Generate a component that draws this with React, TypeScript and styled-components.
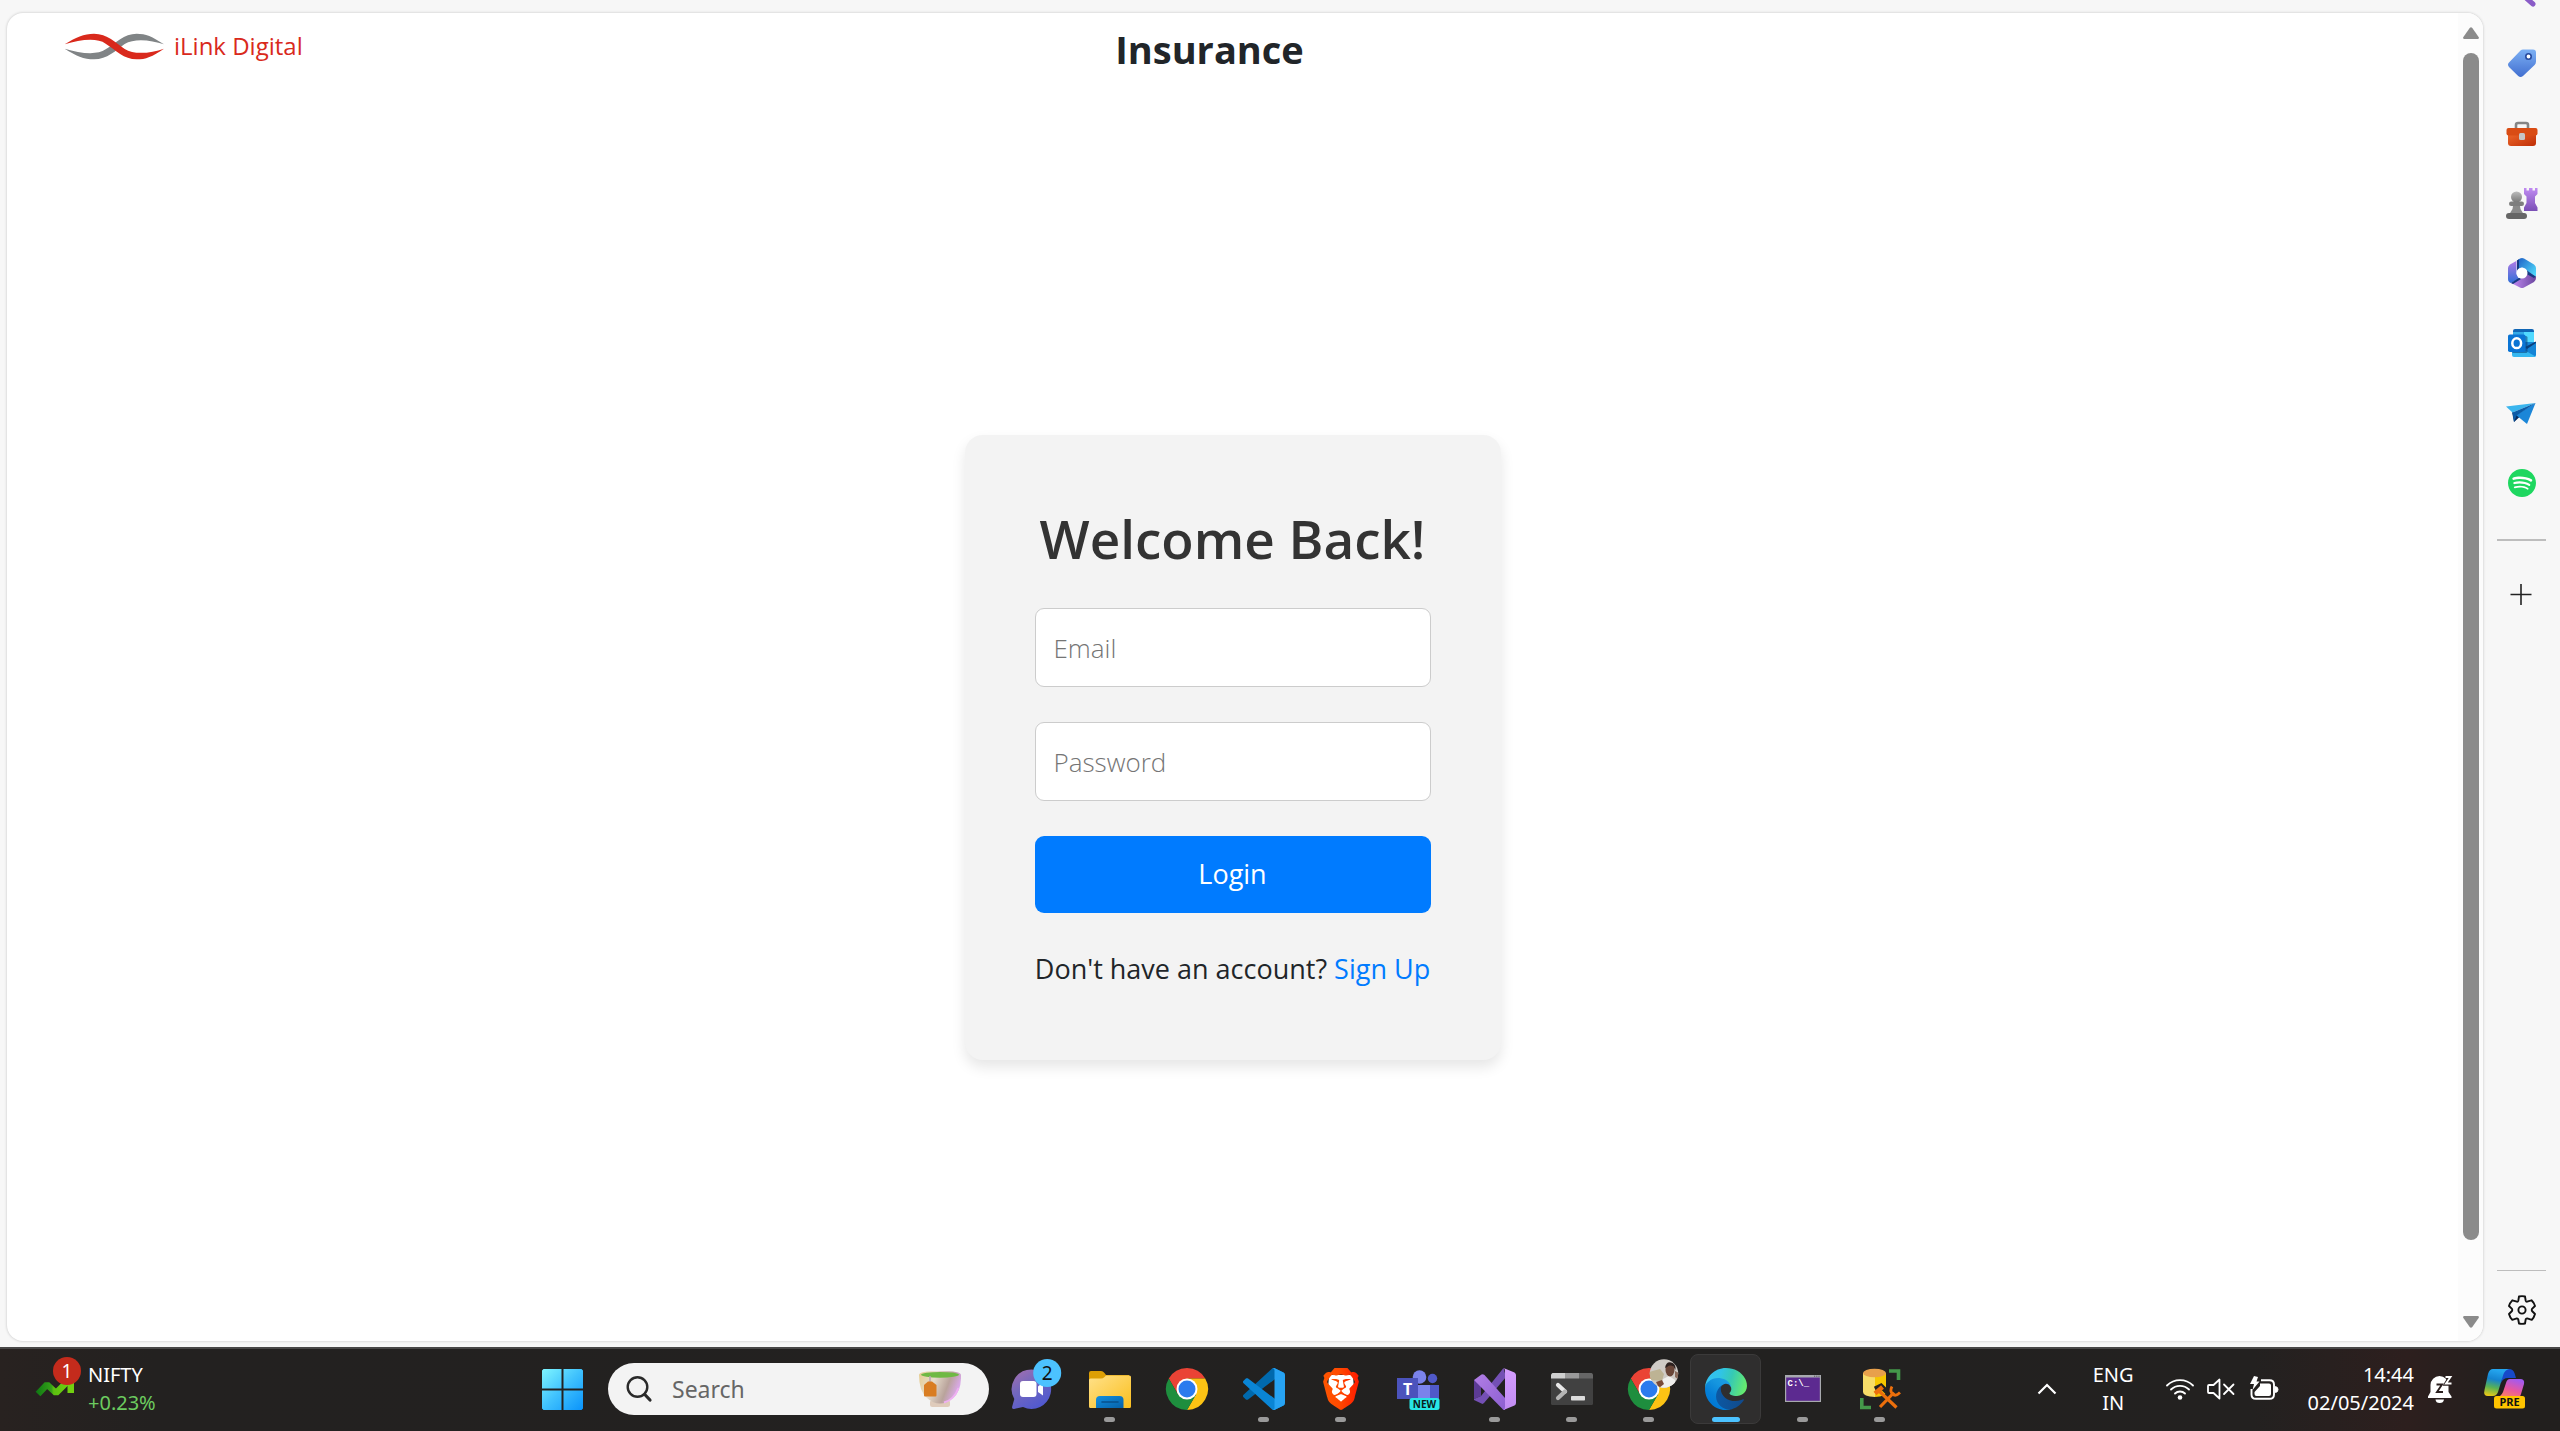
import React from 'react';
import styled, { createGlobalStyle } from 'styled-components';
import { SiBrave, SiSpotify } from 'react-icons/si';

const GlobalStyle = createGlobalStyle`
  *, *::before, *::after { box-sizing: border-box; }
  body {
    margin: 0;
    background: #f7f7f7;
    color: #212529;
    font-family: "Open Sans", "Noto Sans", sans-serif;
    font-size: 27px;
    line-height: 42px;
  }
  h1, h2, p { margin: 0; }
  button, input { font: inherit; }
  button { border: 0; padding: 0; background: none; color: inherit; cursor: pointer; }
  svg { display: block; }
`;

/* ---------- layout ---------- */

const Screen = styled.div`
  display: flex;
  flex-direction: column;
  height: 100vh;
  overflow: hidden;
`;

const BrowserArea = styled.div`
  flex: 1;
  min-height: 0;
  display: flex;
  padding-left: 7px;
`;

const PageFrame = styled.div`
  flex: 1;
  display: flex;
  margin: 13px 0 6px;
  border-radius: 16px;
  background: #fff;
  box-shadow: 0 0 3px rgba(0, 0, 0, 0.22);
  overflow: hidden;
`;

const Page = styled.main`
  flex: 1;
  display: flex;
  flex-direction: column;
`;

const Header = styled.header`
  display: grid;
  grid-template-columns: 1fr auto 1fr;
  height: 70px;
  padding: 8px 103px 0 57px;
`;

const Brand = styled.a`
  display: flex;
  align-items: center;
  justify-self: start;
  gap: 9px;
  height: 50px;
  color: #d9291c;
  font-size: 24px;
  text-decoration: none;
`;

const PageTitle = styled.h1`
  font-size: 38px;
  font-weight: 700;
  line-height: 56px;
`;

const LoginSection = styled.section`
  flex: 1;
  display: flex;
  align-items: center;
  justify-content: center;
  padding-top: 70px;
`;

const Card = styled.form`
  display: flex;
  flex-direction: column;
  gap: 35px;
  width: 536px;
  height: 625px;
  padding: 70px;
  border-radius: 18px;
  background: #f3f3f3;
  box-shadow: 0 7px 14px rgba(0, 0, 0, 0.1);
`;

const CardTitle = styled.h2`
  color: #333;
  font-size: 53px;
  font-weight: 600;
  line-height: 68px;
  text-align: center;
  white-space: nowrap;
`;

const TextInput = styled.input`
  display: block;
  width: 100%;
  height: 79px;
  padding: 2px 18px 0;
  border: 1px solid #ccc;
  border-radius: 9px;
  background: #fff;
  color: #212529;
  font-size: 26px;
  outline: none;
  &::placeholder { color: #757575; font-weight: 300; opacity: 1; }
`;

const LoginButton = styled.button`
  height: 77px;
  border-radius: 9px;
  background: #007bff;
  color: #fff;
`;

const SignUpLine = styled.p`
  text-align: center;
  white-space: nowrap;
`;

const SignUpLink = styled.a`
  color: #007bff;
  text-decoration: none;
`;

const ScrollTrack = styled.div`
  display: flex;
  flex-direction: column;
  align-items: center;
  width: 25px;
  padding: 14px 0 13px;
  background: #fcfcfc;
`;

const ScrollThumb = styled.div`
  width: 16px;
  height: 1187px;
  margin: 14px 0 auto;
  border-radius: 8px;
  background: #8b8b8b;
`;

/* ---------- browser side bar ---------- */

const SideBar = styled.nav`
  display: flex;
  flex-direction: column;
  align-items: center;
  width: 77px;
  padding-bottom: 2px;
`;

const SideList = styled.div`
  display: flex;
  flex-direction: column;
  margin-top: -42px;
`;

const SideButton = styled.button`
  display: flex;
  align-items: center;
  justify-content: center;
  width: 77px;
  height: 70px;
`;

const SideDivider = styled.div<{ $thick?: boolean }>`
  width: 49px;
  height: ${(p) => (p.$thick ? 2 : 1)}px;
  margin: ${(p) => (p.$thick ? '21px 0 19px' : 'auto 0 4px')};
  background: #bdbdbd;
`;

/* ---------- task bar ---------- */

const TaskBar = styled.footer`
  display: grid;
  grid-template-columns: 524px auto 1fr;
  height: 84px;
  padding-bottom: 2px;
  border-top: 2px solid #484747;
  background: linear-gradient(90deg, #282220 0%, #232120 6%, #222120 70%, #232120 88%, #2d1f1e 94%, #221f1e 98%);
  color: #fff;
  font-family: "Noto Sans", "Open Sans", sans-serif;
  font-size: 20px;
  line-height: 28px;
`;

const Widget = styled.button`
  display: flex;
  align-items: center;
  justify-self: start;
  gap: 12px;
  padding-left: 35px;
  text-align: left;
  svg { overflow: visible; }
`;

const WidgetChange = styled.div`
  color: #6ccb5f;
`;

const Apps = styled.div`
  display: flex;
  align-items: stretch;
`;

const SearchBox = styled.label`
  display: flex;
  align-items: center;
  align-self: center;
  width: 381px;
  height: 52px;
  margin: 0 5px 0 7px;
  padding: 0 28px 0 17px;
  border-radius: 26px;
  background: #f3f3f3;
`;

const SearchInput = styled.input`
  flex: 1;
  min-width: 0;
  padding: 0 0 0 19px;
  border: 0;
  outline: none;
  background: none;
  color: #333;
  font-size: 23px;
  &::placeholder { color: #666; opacity: 1; }
`;

const AppButton = styled.button<{ $active?: boolean }>`
  position: relative;
  display: flex;
  align-items: center;
  justify-content: center;
  width: 77px;
  &::before {
    content: "";
    position: absolute;
    inset: 5px 3px;
    border-radius: 8px;
    border: 1px solid #3b3a3a;
    background: #2f2e2e;
    display: ${(p) => (p.$active ? 'block' : 'none')};
  }
  svg { position: relative; overflow: visible; }
`;

const Indicator = styled.span<{ $active?: boolean }>`
  position: absolute;
  bottom: 7px;
  width: ${(p) => (p.$active ? 28 : 11)}px;
  height: 5px;
  border-radius: 3px;
  background: ${(p) => (p.$active ? '#4cc2ff' : '#9a9a9a')};
`;

const Tray = styled.div`
  display: flex;
  align-items: center;
  justify-content: flex-end;
  padding-right: 35px;
`;

const TrayButton = styled.button<{ $gap?: number }>`
  display: flex;
  align-items: center;
  margin-right: ${(p) => p.$gap ?? 0}px;
`;

const Language = styled(TrayButton)`
  display: block;
  text-align: center;
`;

const Clock = styled(TrayButton)`
  display: block;
  text-align: right;
`;

/* ---------- drawings ---------- */

const BrandMark = () => (
  <svg width="101" height="27" viewBox="191 99 301 81" aria-hidden="true">
    <path fill="#808486" d="M192 146C225 167 250 178 280 178C320 178 345 151 372 132C400 114 450 119 490 133C455 109 435 101 408 101C370 101 345 129 315 148C290 166 240 161 192 146Z" />
    <path fill="#d9291c" d="M192 133C225 112 250 101 280 101C320 101 345 128 372 147C400 165 450 160 490 146C455 170 435 178 408 178C370 178 345 150 315 131C290 113 240 118 192 133Z" />
  </svg>
);

const Triangle = ({ down }: { down?: boolean }) => (
  <svg width="16" height="12" viewBox="0 0 16 12" aria-hidden="true">
    <path fill="#8b8b8b" d={down ? 'M1 0H15Q16.5 .5 15.6 2L9.3 11Q8 12.6 6.7 11L.4 2Q-.5 .5 1 0Z' : 'M1 12H15Q16.5 11.5 15.6 10L9.3 1Q8 -.6 6.7 1L.4 10Q-.5 11.5 1 12Z'} />
  </svg>
);

const SearchTail = () => (
  <svg width="32" height="32" viewBox="0 0 32 32" aria-hidden="true">
    <circle cx="12" cy="12" r="9" fill="none" stroke="#3c7fd6" strokeWidth="3" />
    <path d="M19 20L27 27" stroke="#8a5cc7" strokeWidth="5" strokeLinecap="round" />
  </svg>
);

const TagIcon = () => (
  <svg width="32" height="32" viewBox="0 0 32 32" aria-hidden="true">
    <defs>
      <linearGradient id="tag" x1="0" y1="0" x2="0" y2="1">
        <stop offset="0" stopColor="#7cb0f4" /><stop offset="1" stopColor="#426fd0" />
      </linearGradient>
    </defs>
    <path fill="url(#tag)" d="M17 2.500H27Q30 2.500 30 5.500V14.500Q30 16.500 28.600 18L17 29Q14.500 31 12.200 29L3 20Q1 17.500 3 15.500L14.500 3.600Q15.500 2.500 17 2.500Z" />
    <circle cx="22.500" cy="9.500" r="2.700" fill="#fff" stroke="#26499d" strokeWidth="1.600" />
  </svg>
);

const ToolboxIcon = () => (
  <svg width="32" height="32" viewBox="0 0 32 32" aria-hidden="true">
    <defs>
      <linearGradient id="box" x1="0" y1="0" x2="1" y2="1">
        <stop offset="0" stopColor="#f06a2b" /><stop offset="1" stopColor="#bf2e07" />
      </linearGradient>
    </defs>
    <path d="M10 12V8Q10 6 12 6H20Q22 6 22 8V12" fill="none" stroke="#858585" strokeWidth="2.600" />
    <path fill="url(#box)" d="M2 15H30V26Q30 29 27 29H5Q2 29 2 26Z" />
    <rect x=".500" y="11" width="31" height="7.500" rx="2" fill="#d94c14" />
    <rect x="13" y="16" width="6" height="7" rx="1.500" fill="#c6c6c6" />
  </svg>
);

const ChessIcon = () => (
  <svg width="32" height="32" viewBox="0 0 32 32" aria-hidden="true">
    <defs>
      <linearGradient id="rook" x1="0" y1="0" x2="0" y2="1">
        <stop offset="0" stopColor="#c08bf2" /><stop offset="1" stopColor="#7a4fb5" />
      </linearGradient>
      <linearGradient id="pawn" x1="0" y1="0" x2="0" y2="1">
        <stop offset="0" stopColor="#bcbcbc" /><stop offset="1" stopColor="#777" />
      </linearGradient>
    </defs>
    <path fill="url(#rook)" d="M18 1H20.500V3.500H23V1H26.500V3.500H29V1H31.500V7L29 9.500V16L31.500 20.500V24H18V20.500L20.500 16V9.500L18 7Z" />
    <path fill="#8a8a8a" d="M7.500 16H13.500L14.500 22L17.500 27H3.500L6.500 22Z" />
    <circle cx="10.500" cy="10" r="5.500" fill="url(#pawn)" />
    <rect x="3" y="14.500" width="15" height="4.500" rx="2.200" fill="#7e7e7e" />
    <rect x="0" y="26" width="21" height="6" rx="3" fill="#666" />
  </svg>
);

const M365Icon = () => (
  <svg width="32" height="32" viewBox="0 0 32 32" aria-hidden="true">
    <defs>
      <linearGradient id="m1" x1="0" y1="0" x2="0" y2="1">
        <stop offset="0" stopColor="#b57be6" /><stop offset="1" stopColor="#2f6fd8" />
      </linearGradient>
      <linearGradient id="m2" x1="0" y1="0" x2="1" y2=".8">
        <stop offset="0" stopColor="#1c5bc4" /><stop offset="1" stopColor="#4fd8fb" />
      </linearGradient>
      <linearGradient id="m3" x1="0" y1="0" x2="1" y2="0">
        <stop offset="0" stopColor="#c48cf5" /><stop offset="1" stopColor="#6b479f" />
      </linearGradient>
    </defs>
    <path fill="url(#m1)" d="M12 3L4 7.500Q2 9 2 11V22Q2 25 5 26L13 22L10.500 17V3.500Z" />
    <path fill="url(#m2)" d="M11 3.500L14 1.500Q16 .5 18 1.500L28 7.500Q30 9 30 11V20L21 14L16 10.500L11 15Z" />
    <path fill="url(#m3)" d="M30 19.500V21Q30 23.500 28 25L18 30.500Q16 31.500 14 30.500L5 26L15 21L21 15Z" />
    <path fill="#173a83" d="M11 3.500L13 2.300V12L11 15ZM21 13.500L29.500 19.500L28 21L20.500 17ZM5 26L13.500 20.500L15 22L7 27Z" />
    <circle cx="16" cy="16" r="5.500" fill="#fff" />
  </svg>
);

const OutlookIcon = () => (
  <svg width="32" height="32" viewBox="0 0 32 32" aria-hidden="true">
    <path fill="#1066b5" d="M7 4Q7 2 9 2H26Q28 2 28 4V8H7Z" />
    <path fill="#32a9e7" d="M7 5H18V15H7Z" />
    <path fill="#50d9ff" d="M18 5H28V15H18Z" />
    <path fill="#1484d6" d="M18 15H30V28Q30 30 28 30H18Z" />
    <path fill="#0a3f7c" d="M19 20L30 14.500V16L21 22Z" />
    <path fill="#35b8f1" d="M6 24H20L29.500 29.500Q29 30 28 30H8Q6 30 6 28Z" />
    <rect x="6" y="9" width="15.500" height="17" rx="1.500" fill="#083c74" opacity=".55" />
    <rect x="2" y="7.500" width="17.500" height="17.500" rx="1.800" fill="#0a74d4" />
    <ellipse cx="10.700" cy="16.200" rx="4.400" ry="4.900" fill="none" stroke="#fff" strokeWidth="2.500" />
  </svg>
);

const PlaneIcon = () => (
  <svg width="32" height="32" viewBox="0 0 32 32" aria-hidden="true">
    <path fill="#0c3c78" d="M6 15L8 25L13.500 19Z" />
    <path fill="#072b5e" d="M8 25L11 17.500L14 19.500Z" />
    <path fill="#3ab5ee" d="M0 9.500L29.500 6L6.500 15.500Z" />
    <path fill="#1b86d8" d="M29.500 6L21 27L10 18Z" />
    <path fill="#0c5ba7" d="M6.500 15.500L29.500 6L10.500 18.500L8 25Z" />
  </svg>
);

const SpotifyIcon = () => (
  <svg width="30" height="30" viewBox="0 0 30 30" aria-hidden="true">
    <circle cx="15" cy="15" r="13" fill="#fff" />
    <SiSpotify x="1" y="1" size={28} color="#1ed760" />
  </svg>
);

const PlusIcon = () => (
  <svg width="24" height="24" viewBox="0 0 24 24" aria-hidden="true">
    <path d="M11 1V22M.5 11.500H21.500" stroke="#222" strokeWidth="1.600" />
  </svg>
);

const GearIcon = () => (
  <svg width="32" height="32" viewBox="0 0 32 32" fill="none" stroke="#111" strokeWidth="1.900" strokeLinejoin="round" aria-hidden="true">
    <path d="M13 2.500Q16 1.800 19 2.500L19.700 6.700Q20 7.600 21 7.700L25.500 6.300Q28.300 9 29 12L26 14.900Q25.400 16 26 17L29 20Q28.200 23.200 25.800 25.800L21.200 24.400Q20 24.300 19.700 25.300L19 29.500Q16 30.200 13 29.500L12.200 25.300Q11.900 24.300 10.800 24.400L6.300 25.800Q3.800 23.200 3 20L6 17Q6.600 16 6 14.900L3 12Q3.700 9 6.300 6.300L11 7.700Q12 7.600 12.300 6.700Z" />
    <circle cx="16" cy="16" r="3.600" />
  </svg>
);

const StocksIcon = () => (
  <svg width="41" height="42" viewBox="0 0 41 42" aria-hidden="true">
    <defs>
      <linearGradient id="st" gradientUnits="userSpaceOnUse" x1="0" x2="39" y1="0" y2="0">
        <stop offset="0" stopColor="#0c7513" /><stop offset=".42" stopColor="#35a018" /><stop offset=".48" stopColor="#5cc010" /><stop offset="1" stopColor="#74d60e" />
      </linearGradient>
    </defs>
    <path fill="none" stroke="url(#st)" strokeWidth="6.500" strokeLinejoin="bevel" d="M3 26L12 16.500L21 25L33 13" />
    <path fill="#72d010" d="M20 6H39V25H32.500V16Z" />
    <circle cx="32" cy="3" r="14" fill="#c42b1c" />
    <text x="32" y="10" textAnchor="middle" fontSize="19" fill="#fff">1</text>
  </svg>
);

const WindowsIcon = () => (
  <svg width="41" height="41" viewBox="0 0 41 41" aria-hidden="true">
    <defs>
      <linearGradient id="win" gradientUnits="userSpaceOnUse" x1="0" y1="0" x2="41" y2="41">
        <stop offset="0" stopColor="#7ff6ff" /><stop offset=".5" stopColor="#3fc1fd" /><stop offset="1" stopColor="#0a93fb" />
      </linearGradient>
    </defs>
    <path fill="url(#win)" d="M1.500 0H19.500V19.500H0V1.500ZM21.500 0H39.500L41 1.500V19.500H21.500ZM0 21.500H19.500V41H1.500L0 39.500ZM21.500 21.500H41V39.500L39.500 41H21.500Z" />
  </svg>
);

const MagnifierIcon = () => (
  <svg width="28" height="28" viewBox="0 0 28 28" fill="none" stroke="#2a2a2a" strokeLinecap="round" aria-hidden="true">
    <circle cx="12.500" cy="12" r="9.800" strokeWidth="2.400" />
    <path d="M19.800 19.500L25 25" strokeWidth="3.200" />
  </svg>
);

const TeaIcon = () => (
  <svg width="42" height="36" viewBox="0 0 42 36" aria-hidden="true">
    <defs>
      <linearGradient id="cup" x1="0" x2="1" y1="0" y2=".3">
        <stop offset="0" stopColor="#e6cc8e" /><stop offset=".4" stopColor="#e6dccb" /><stop offset=".75" stopColor="#b9a39b" /><stop offset="1" stopColor="#d9a9e6" />
      </linearGradient>
    </defs>
    <rect x="11" y="29" width="20" height="7" rx="2.500" fill="#dfcbbb" />
    <path fill="url(#cup)" d="M0 4Q0 0 21 0T42 4Q42.500 20 34 27Q28 32.500 21 32.500T8 27Q0 20 0 4Z" />
    <path d="M39.500 17Q35 29 25 31.500" stroke="#efb0f2" strokeWidth="2" fill="none" />
    <ellipse cx="21" cy="3.800" rx="19" ry="2.900" fill="#6fb944" />
    <path d="M11 5V11" stroke="#b8a4b0" strokeWidth="1.500" />
    <path fill="#d97d22" d="M5 14L9 10.500H13L17.500 14V24.500Q17.500 25.500 16.500 25.500H6Q5 25.500 5 24.500Z" />
  </svg>
);

const ChatIcon = () => (
  <svg width="42" height="42" viewBox="0 0 42 42" aria-hidden="true">
    <defs>
      <linearGradient id="chat" x1="0" x2=".6" y1="0" y2="1">
        <stop offset="0" stopColor="#a76fae" /><stop offset=".45" stopColor="#7568bd" /><stop offset="1" stopColor="#5159cf" />
      </linearGradient>
    </defs>
    <path fill="url(#chat)" d="M19.500 1.500A19.700 19.700 0 1 1 11 39L2 41Q-.5 41 .2 38.500L2.300 31A19.700 19.700 0 0 1 19.500 1.500Z" />
    <rect x="8" y="13" width="16.500" height="16" rx="3" fill="#fff" />
    <path fill="#fff" d="M26 18.500L31 14.500V27.500L26 24Z" />
    <circle cx="35.200" cy="5" r="14" fill="#4cc2ff" />
    <text x="35.200" y="12" textAnchor="middle" fontSize="19" fill="#111">2</text>
  </svg>
);

const FolderIcon = () => (
  <svg width="42" height="42" viewBox="0 0 42 42" aria-hidden="true">
    <defs>
      <linearGradient id="fol" x1="0" x2="1" y1="0" y2="1">
        <stop offset="0" stopColor="#ffe18a" /><stop offset="1" stopColor="#fbbf1e" />
      </linearGradient>
      <linearGradient id="folb" x1="0" x2="1" y1="0" y2="1">
        <stop offset="0" stopColor="#1490df" /><stop offset="1" stopColor="#0560a8" />
      </linearGradient>
    </defs>
    <path fill="#dd9f05" d="M0 5Q0 3 2 3H12Q14 3 15.500 5L17 7H40V16H0Z" />
    <path fill="url(#fol)" d="M0 12Q0 10.500 1.500 10.500H12Q14 10.500 15.500 9L17 7.500H40.500Q42 7.500 42 9V38.500Q42 40 40.500 40H1.500Q0 40 0 38.500Z" />
    <path fill="url(#folb)" d="M7 40V32Q7 28 11 28H30.500Q34.500 28 34.500 32V40Z" />
    <path d="M13 34H29" stroke="#07508c" strokeWidth="1.600" strokeLinecap="round" />
  </svg>
);

const ChromeIcon = ({ profile }: { profile?: boolean }) => (
  <svg width="42" height="42" viewBox="0 0 42 42" aria-hidden="true">
    <path fill="#ea4335" d="M39.190 10.500A21 21 0 0 0 2.810 10.500L11.900 26.250L21 21V10.500Z" />
    <path fill="#fcc314" d="M39.190 10.500A21 21 0 0 1 21 42L30.090 26.250L21 21V10.500Z" />
    <path fill="#1e8e3e" d="M21 42A21 21 0 0 1 2.810 10.500L11.900 26.250L21 21L30.090 26.250Z" />
    <circle cx="21" cy="21" r="10.500" fill="#fff" />
    <circle cx="21" cy="21" r="8.500" fill="#2b7bee" />
    {profile && (
      <g>
        <clipPath id="face"><circle cx="36" cy="5.500" r="14.200" /></clipPath>
        <g clipPath="url(#face)">
          <rect x="21" y="-9" width="30" height="30" fill="#cfcbc6" />
          <path fill="#bdb394" d="M21 4L32 1L36 6L34 13L21 12Z" />
          <path fill="#f0efed" d="M35 11L41 8L47 12V21H31Z" />
          <ellipse cx="42" cy="2" rx="4.500" ry="6.500" fill="#6a4638" />
          <path fill="#2d211f" d="M37 0Q38 -6.500 43 -5.500Q48 -5 47.500 2L45.500 -1.500Q42 -3.500 39 -1Z" />
          <path fill="#7a4a38" d="M28 14L34 12L36 16L31 20Z" />
          <path fill="#8a6b5c" d="M47 3L51 5V12L47 9Z" />
        </g>
      </g>
    )}
  </svg>
);

const VsCodeIcon = () => (
  <svg width="42" height="42" viewBox="0 0 100 100" aria-hidden="true">
    <path fill="#0069ad" d="M96.461 10.796L75.857.876C73.472-.273 70.622.212 68.750 2.083L1.299 63.583C-.516 65.237-.514 68.094 1.303 69.745L6.813 74.754C8.298 76.104 10.535 76.204 12.134 74.990L93.361 13.370C96.086 11.303 100 13.246 100 16.667V16.428C100 14.027 98.625 11.838 96.461 10.796Z" />
    <path fill="#0a85d5" d="M96.461 89.204L75.857 99.125C73.472 100.273 70.622 99.788 68.750 97.917L1.299 36.417C-.516 34.763-.514 31.906 1.303 30.255L6.813 25.246C8.298 23.896 10.535 23.796 12.134 25.010L93.361 86.630C96.086 88.697 100 86.754 100 83.333V83.573C100 85.974 98.625 88.162 96.461 89.204Z" />
    <path fill="#27a3f3" d="M75.858 99.126C73.472 100.274 70.622 99.789 68.750 97.917C71.056 100.223 75 98.590 75 95.328V4.672C75 1.410 71.056-.223 68.750 2.083C70.622.211 73.472-.274 75.858.874L96.459 10.781C98.623 11.822 100 14.011 100 16.413V83.587C100 85.989 98.623 88.179 96.459 89.220L75.858 99.126Z" />
  </svg>
);

const BraveIcon = () => (
  <svg width="42" height="42" viewBox="0 0 42 42" aria-hidden="true">
    <defs>
      <linearGradient id="brv" x1="0" x2="1" y1="0" y2="0">
        <stop offset="0" stopColor="#ff5500" /><stop offset=".45" stopColor="#ff4a00" /><stop offset="1" stopColor="#ff1a00" />
      </linearGradient>
    </defs>
    <path fill="#fff" d="M9 7H33L34 22L29 33L21 38L13 33L8 22Z" />
    <SiBrave x="0" y="0" size={42} fill="url(#brv)" />
  </svg>
);

const TeamsIcon = () => (
  <svg width="42" height="42" viewBox="0 0 42 42" aria-hidden="true">
    <circle cx="22.500" cy="9" r="6.800" fill="#7b83eb" />
    <circle cx="35.500" cy="10.500" r="4.700" fill="#5059c9" />
    <rect x="28" y="17" width="14" height="16" fill="#5059c9" />
    <rect x="18" y="17" width="15" height="18" fill="#7b83eb" />
    <rect x="0" y="10" width="21" height="21" fill="#4b53bc" />
    <text x="10.500" y="26.500" textAnchor="middle" fontSize="16" fontWeight="700" fill="#fff">T</text>
    <rect x="12.500" y="30" width="30" height="12" rx="2.500" fill="#27e6e6" />
    <text x="27.500" y="39.500" textAnchor="middle" fontSize="10" fontWeight="700" fill="#0b1a1a">NEW</text>
  </svg>
);

const VisualStudioIcon = () => (
  <svg width="42" height="42" viewBox="0 0 42 42" aria-hidden="true">
    <defs>
      <linearGradient id="vs" x1="0" x2="0" y1="0" y2="1">
        <stop offset="0" stopColor="#d59dff" /><stop offset="1" stopColor="#c18cf2" />
      </linearGradient>
      <linearGradient id="vs2" x1="0" x2="1" y1="0" y2="1">
        <stop offset="0" stopColor="#b27ee6" /><stop offset="1" stopColor="#8c5fd0" />
      </linearGradient>
    </defs>
    <path fill="#5c3b96" d="M0 12L7 15V28L0 31Z" />
    <path fill="#7450b4" d="M0 31L7 28L29.500 0L32 9L10 35L8.500 36L0 32Z" />
    <path fill="url(#vs2)" d="M0 12L7.500 6.500Q9 6 10.500 7L31 30V42L29.500 42Z" />
    <path fill="url(#vs)" d="M29.500 0L40.500 4.500Q42 5.500 42 7V35Q42 36.500 40.500 37.500L29.500 42Q31 41.500 31 39V3Q31 .5 29.500 0Z" />
  </svg>
);

const TerminalIcon = () => (
  <svg width="42" height="42" viewBox="0 0 42 42" aria-hidden="true">
    <rect x="0" y="5" width="42" height="32" rx="1.500" fill="#414141" />
    <path fill="#cfcfcf" d="M1.500 5H14V10.500H0V6.500Z" />
    <path fill="#9a9a9a" d="M14 5H28V10.500H14Z" />
    <path fill="#666" d="M28 5H40.500L42 6.500V10.500H28Z" />
    <path d="M7 17L14 23.500" stroke="#e8e8e8" strokeWidth="4.200" strokeLinecap="round" />
    <path d="M7 30L14 23.500" stroke="#b5b5b5" strokeWidth="4.200" strokeLinecap="round" />
    <rect x="20" y="28" width="14" height="4.500" rx=".8" fill="#dcdcdc" />
  </svg>
);

const EdgeIcon = () => (
  <svg width="42" height="42" viewBox="0 0 256 256" aria-hidden="true">
    <defs>
      <linearGradient id="eg1" gradientUnits="userSpaceOnUse" x1="60" y1="170" x2="240" y2="180">
        <stop offset="0" stopColor="#0c59a4" /><stop offset="1" stopColor="#114a8b" />
      </linearGradient>
      <linearGradient id="eg2" gradientUnits="userSpaceOnUse" x1="150" y1="90" x2="45" y2="225">
        <stop offset="0" stopColor="#1b9de2" /><stop offset=".3" stopColor="#1595df" /><stop offset=".7" stopColor="#0680d7" /><stop offset="1" stopColor="#0078d4" />
      </linearGradient>
      <linearGradient id="eg3" gradientUnits="userSpaceOnUse" x1="10" y1="50" x2="245" y2="120">
        <stop offset="0" stopColor="#35c1f1" /><stop offset=".3" stopColor="#30c4e8" /><stop offset=".6" stopColor="#36c9b4" /><stop offset="1" stopColor="#66eb6e" />
      </linearGradient>
    </defs>
    <path fill="url(#eg1)" d="M231,190.500c-3.400,1.800-6.900,3.400-10.500,4.700c-11.500,4.300-23.600,6.500-35.900,6.500c-47.300,0-88.500-32.500-88.500-74.300c0.100-11.400,6.400-21.900,16.400-27.300c-42.800,1.800-53.800,46.400-53.800,72.500c0,73.900,68.100,81.400,82.800,81.400c7.900,0,19.800-2.300,27-4.600l1.300-0.400c27.600-9.500,51-28.100,66.600-52.800c1.200-1.900,0.600-4.300-1.200-5.500C233.900,189.900,232.300,189.800,231,190.500z" />
    <path fill="url(#eg2)" d="M105.700,241.400c-8.900-5.500-16.600-12.800-22.700-21.300c-26.300-36-18.400-86.500,17.600-112.800c3.800-2.700,7.700-5.200,11.900-7.200c3.100-1.500,8.400-4.100,15.500-4c10.100,0.100,19.600,4.900,25.700,13c4,5.400,6.300,11.900,6.400,18.700c0-0.200,24.500-79.600-80-79.600c-43.900,0-80,41.700-80,78.200c-0.200,19.300,4,38.500,12.100,56c27.600,58.800,94.800,87.600,156.400,67.100C147.600,256.300,124.500,253.200,105.700,241.400L105.700,241.400z" />
    <path fill="url(#eg3)" d="M152.300,148.900c-0.800,1-3.300,2.500-3.300,5.700c0,2.600,1.700,5.100,4.700,7.200c14.400,10,41.500,8.700,41.600,8.700c10.700,0,21.100-2.900,30.300-8.300c18.800-11,30.400-31.100,30.400-52.900c0.300-22.400-8-37.300-11.300-43.900C223.500,23.900,177.700,0,128,0C58,0,1,56.200,0,126.200c0.500-36.500,36.800-66,80-66c3.500,0,23.500,0.300,42,10.100c16.300,8.600,24.900,18.900,30.800,29.200c6.200,10.700,7.300,24.100,7.300,29.500C160.100,134.300,157.400,142.300,152.300,148.900z" />
  </svg>
);

const CommandIcon = () => (
  <svg width="42" height="42" viewBox="0 0 42 42" aria-hidden="true">
    <rect x="3" y="7" width="36" height="27" fill="#a7a9ae" />
    <path d="M32 8.200H38" stroke="#555" strokeWidth="1" strokeDasharray="1.200 1" />
    <rect x="4.200" y="9.500" width="33.600" height="23.300" fill="#5c2a90" />
    <text x="5.500" y="18" fontSize="9" fontWeight="700" fontFamily="Liberation Mono, monospace" fill="#fff">C:\_</text>
  </svg>
);

const DatabaseToolsIcon = () => (
  <svg width="42" height="42" viewBox="0 0 42 42" aria-hidden="true">
    <path fill="#f7dc68" d="M4 5H16V29Q4 28.500 4 24Z" />
    <path fill="#f6c700" d="M16 5H27V24Q27 28.500 16 29Z" />
    <ellipse cx="15.500" cy="5" rx="11.500" ry="4.300" fill="#e8a04b" />
    <path fill="none" stroke="#44994a" strokeWidth="3.600" d="M30 3H39.500V12M2.800 30V39.500H12" />
    <path stroke="#232120" strokeWidth="5" d="M16 21L22 18L29 25" fill="none" />
    <g stroke="#ec6f0c" strokeWidth="3.200" fill="none">
      <path d="M19 22L37.500 39.500M21 39L35 24.500" />
      <path d="M16 25.500L23.500 19" strokeWidth="4.400" />
      <path d="M33 18.500Q30.500 23 33.500 26T41 24.500" strokeWidth="2.800" />
    </g>
  </svg>
);

const ChevronIcon = () => (
  <svg width="20" height="12" viewBox="0 0 20 12" aria-hidden="true">
    <path d="M1.500 10.500L10 2L18.500 10.500" fill="none" stroke="#fff" strokeWidth="2.200" />
  </svg>
);

const WifiIcon = () => (
  <svg width="28" height="24" viewBox="0 0 28 24" fill="none" stroke="#fff" strokeWidth="1.800" strokeLinecap="round" aria-hidden="true">
    <path d="M1 8.500A18.500 18.500 0 0 1 27 8.500M5 12.500A12.800 12.800 0 0 1 23 12.500M9 16.500A7.200 7.200 0 0 1 19 16.500" />
    <circle cx="14" cy="20.500" r="2.300" fill="#fff" stroke="none" />
  </svg>
);

const MutedIcon = () => (
  <svg width="28" height="22" viewBox="0 0 28 22" fill="none" stroke="#fff" strokeWidth="1.800" strokeLinejoin="round" aria-hidden="true">
    <path d="M2 7H6.500L12.500 1.500V20.500L6.500 15H2Q1 15 1 14V8Q1 7 2 7Z" />
    <path d="M17 6.500L26.500 16M26.500 6.500L17 16" strokeLinecap="round" />
  </svg>
);

const BatteryIcon = () => (
  <svg width="30" height="26" viewBox="0 0 30 26" aria-hidden="true">
    <path d="M12 4.200H20.500Q25 4.200 25 8.500V18.500Q25 22.800 20.500 22.800H7Q2.500 22.800 2.500 18.500V13" fill="none" stroke="#fff" strokeWidth="1.900" />
    <path d="M26.500 10.500Q29 11 29 13.500T26.500 16.500Z" fill="#fff" stroke="#fff" />
    <path d="M11 7.500H20Q22 7.500 22 9.500V18Q22 20 20 20H7.500Q5.500 20 5.500 18V16L11 10Z" fill="#fff" />
    <path d="M5 0L9 1L7.500 5.500H10.500L3.500 14L5 8H1Z" fill="#fff" />
  </svg>
);

const BellIcon = () => (
  <svg width="26" height="30" viewBox="0 0 26 30" aria-hidden="true">
    <path fill="#fff" d="M11.500 2A9 9 0 0 1 20.500 11V18L23.500 22.500V24H0V22.500L2.500 18V11A9 9 0 0 1 11.500 2ZM7.500 25.500H16Q15.500 29 11.700 29T7.500 25.500Z" />
    <path fill="none" stroke="#2a1f1e" strokeWidth="1.900" d="M8.500 10.500H14L9 18H15" />
    <path fill="none" stroke="#2a1f1e" strokeWidth="4.400" d="M18 3H22.500L18.500 9.500H23.500" />
    <path fill="none" stroke="#fff" strokeWidth="1.900" d="M17.500 3H22.500L18 9.500H23.500" />
  </svg>
);

const CopilotIcon = () => (
  <svg width="42" height="42" viewBox="0 0 42 42" aria-hidden="true">
    <defs>
      <linearGradient id="cp1" x1=".3" x2=".1" y1="0" y2="1">
        <stop offset="0" stopColor="#24a5ee" /><stop offset=".35" stopColor="#1583cf" /><stop offset=".65" stopColor="#58b254" /><stop offset="1" stopColor="#f7cb12" />
      </linearGradient>
      <linearGradient id="cp2" x1=".7" x2=".2" y1="0" y2="1">
        <stop offset="0" stopColor="#a35af0" /><stop offset=".5" stopColor="#e8579f" /><stop offset="1" stopColor="#ff8a55" />
      </linearGradient>
    </defs>
    <path fill="#1749c9" d="M20 1H26Q30 1 31.500 5L33 10H25Q20 10 18 15Z" />
    <path fill="url(#cp1)" d="M10 1H26Q22 2 20.500 6L15 24Q13.500 28 10 28H5Q0 28 1.500 22L5 6Q6.500 1 10 1Z" />
    <path fill="url(#cp2)" d="M27 11H37Q42 11 41 16L38 26Q37 30 33 30H12Q18 29 20 24L23 15Q24 11 27 11Z" />
    <rect x="11" y="28" width="31" height="12.500" rx="2.500" fill="#ffc400" />
    <text x="26.500" y="38" textAnchor="middle" fontSize="11" fontWeight="700" fill="#111">PRE</text>
  </svg>
);

/* ---------- content ---------- */

const sideApps = [
  { name: 'Search', icon: <SearchTail /> },
  { name: 'Shopping', icon: <TagIcon /> },
  { name: 'Tools', icon: <ToolboxIcon /> },
  { name: 'Games', icon: <ChessIcon /> },
  { name: 'Microsoft 365', icon: <M365Icon /> },
  { name: 'Outlook', icon: <OutlookIcon /> },
  { name: 'Drop', icon: <PlaneIcon /> },
  { name: 'Spotify', icon: <SpotifyIcon /> },
];

const taskApps = [
  { name: 'Chat', icon: <ChatIcon />, running: false },
  { name: 'File Explorer', icon: <FolderIcon />, running: true },
  { name: 'Chrome', icon: <ChromeIcon />, running: false },
  { name: 'Visual Studio Code', icon: <VsCodeIcon />, running: true },
  { name: 'Brave', icon: <BraveIcon />, running: true },
  { name: 'Teams', icon: <TeamsIcon />, running: false },
  { name: 'Visual Studio', icon: <VisualStudioIcon />, running: true },
  { name: 'Terminal', icon: <TerminalIcon />, running: true },
  { name: 'Chrome profile', icon: <ChromeIcon profile />, running: true },
  { name: 'Edge', icon: <EdgeIcon />, running: true, active: true },
  { name: 'Command prompt', icon: <CommandIcon />, running: true },
  { name: 'SQL Server Management Studio', icon: <DatabaseToolsIcon />, running: true },
];

export default function App() {
  return (
    <Screen>
      <GlobalStyle />
      <BrowserArea>
        <PageFrame>
          <Page>
            <Header>
              <Brand href="#">
                <BrandMark />
                iLink Digital
              </Brand>
              <PageTitle>Insurance</PageTitle>
            </Header>
            <LoginSection>
              <Card onSubmit={(e) => e.preventDefault()}>
                <CardTitle>Welcome Back!</CardTitle>
                <TextInput type="email" placeholder="Email" aria-label="Email" />
                <TextInput type="password" placeholder="Password" aria-label="Password" />
                <LoginButton type="submit">Login</LoginButton>
                <SignUpLine>
                  Don't have an account? <SignUpLink href="#">Sign Up</SignUpLink>
                </SignUpLine>
              </Card>
            </LoginSection>
          </Page>
          <ScrollTrack>
            <Triangle />
            <ScrollThumb />
            <Triangle down />
          </ScrollTrack>
        </PageFrame>
        <SideBar>
          <SideList>
            {sideApps.map((a) => (
              <SideButton key={a.name} type="button" aria-label={a.name}>{a.icon}</SideButton>
            ))}
          </SideList>
          <SideDivider $thick />
          <SideButton type="button" aria-label="Customize"><PlusIcon /></SideButton>
          <SideDivider />
          <SideButton type="button" aria-label="Settings"><GearIcon /></SideButton>
        </SideBar>
      </BrowserArea>
      <TaskBar>
        <Widget type="button">
          <StocksIcon />
          <div>
            <div>NIFTY</div>
            <WidgetChange>+0.23%</WidgetChange>
          </div>
        </Widget>
        <Apps>
          <AppButton type="button" aria-label="Start"><WindowsIcon /></AppButton>
          <SearchBox>
            <MagnifierIcon />
            <SearchInput type="text" placeholder="Search" aria-label="Search" />
            <TeaIcon />
          </SearchBox>
          {taskApps.map((a) => (
            <AppButton key={a.name} type="button" aria-label={a.name} $active={a.active}>
              {a.icon}
              {a.running && <Indicator $active={a.active} />}
            </AppButton>
          ))}
        </Apps>
        <Tray>
          <TrayButton type="button" aria-label="Show hidden icons" $gap={36}><ChevronIcon /></TrayButton>
          <Language type="button" $gap={32}>
            <div>ENG</div>
            <div>IN</div>
          </Language>
          <TrayButton type="button" aria-label="Network" $gap={13}><WifiIcon /></TrayButton>
          <TrayButton type="button" aria-label="Volume" $gap={14}><MutedIcon /></TrayButton>
          <TrayButton type="button" aria-label="Battery" $gap={29}><BatteryIcon /></TrayButton>
          <Clock type="button" $gap={14}>
            <div>14:44</div>
            <div>02/05/2024</div>
          </Clock>
          <TrayButton type="button" aria-label="Notifications" $gap={29}><BellIcon /></TrayButton>
          <TrayButton type="button" aria-label="Copilot"><CopilotIcon /></TrayButton>
        </Tray>
      </TaskBar>
    </Screen>
  );
}
